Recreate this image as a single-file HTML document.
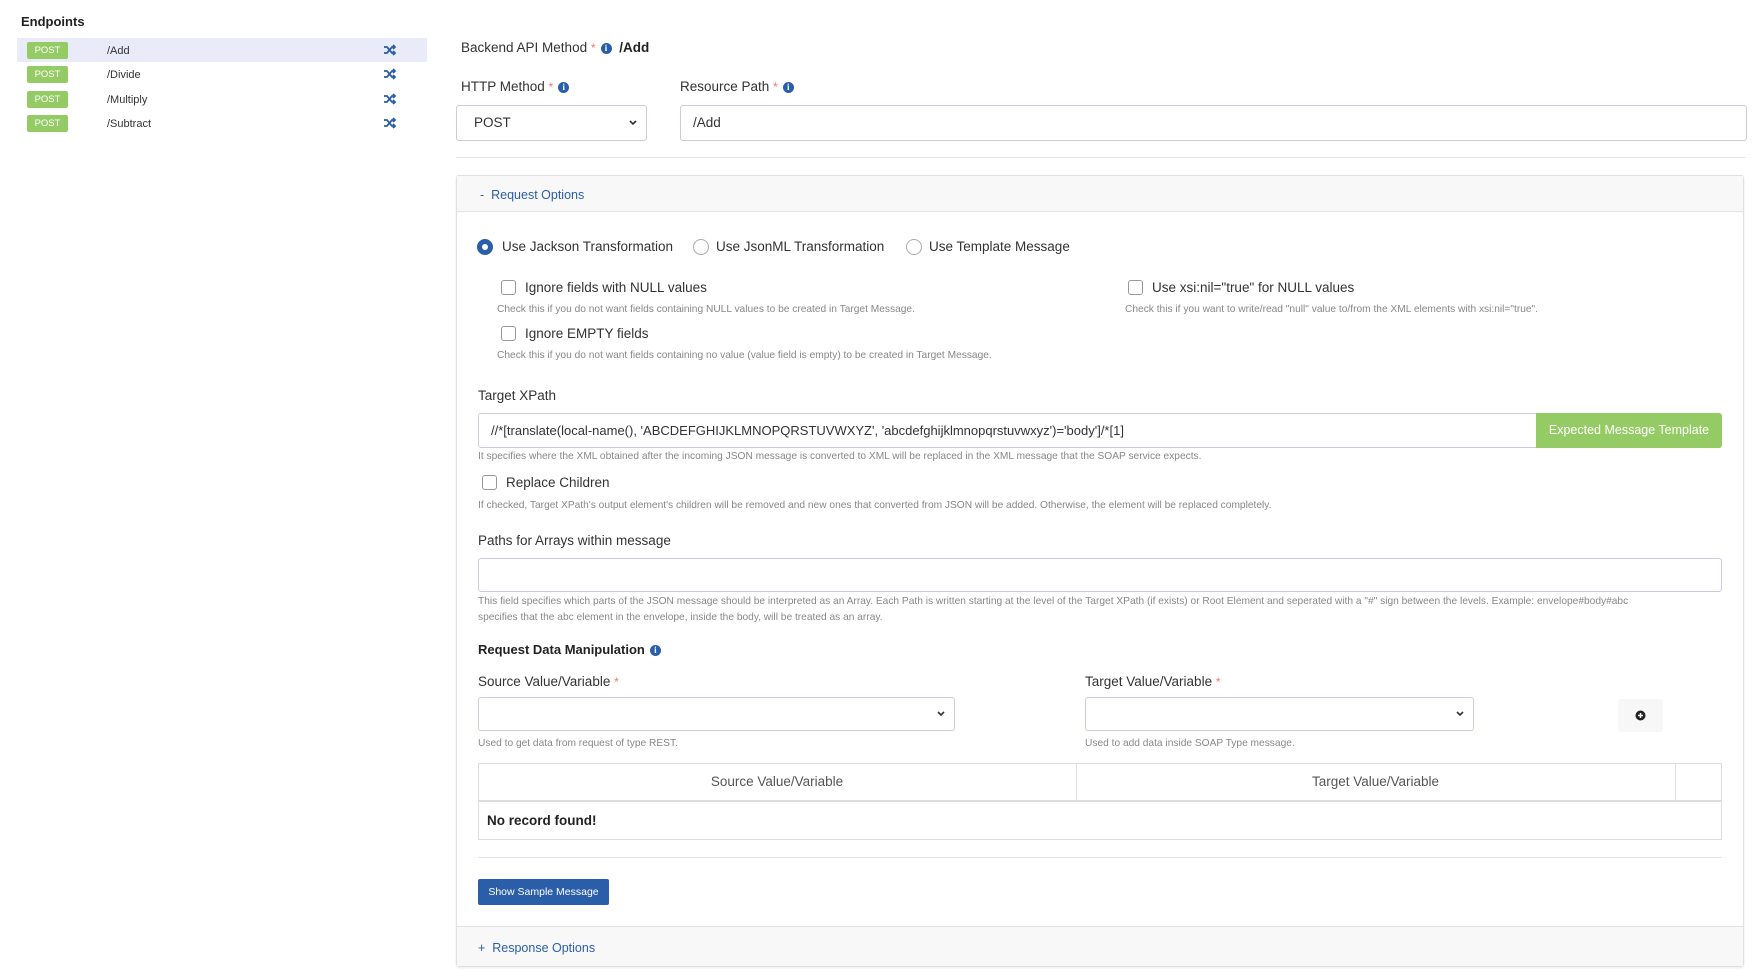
<!DOCTYPE html>
<html><head><meta charset="utf-8"><style>
*{box-sizing:border-box;margin:0;padding:0}
body{width:1759px;height:977px;background:#fff;font-family:"Liberation Sans",sans-serif;color:#333;position:relative;overflow:hidden}
.a{position:absolute;white-space:nowrap}
.lbl{font-size:13.5px;color:#333}
.req{color:#e77;font-size:12px}
.help{font-size:10.2px;color:#888}
.info{display:inline-block;width:11px;height:11px;border-radius:50%;background:#2a5ea8;color:#fff;font-size:9px;font-weight:bold;text-align:center;line-height:11px;vertical-align:middle;margin-left:5px;font-family:"Liberation Serif",serif}
.badge{position:absolute;left:27px;width:41px;height:17px;background:#95cb65;color:#fff;font-size:9.5px;text-align:center;line-height:17px;border-radius:2px}
.path{position:absolute;left:107px;font-size:11px;color:#333}
.shuf{position:absolute;left:384px;width:12px;height:12px}
.box{position:absolute;border:1px solid #ccd;border-radius:3px;background:#fff}
.cb{position:absolute;width:15px;height:15px;border:1px solid #999;border-radius:3px;background:#fff}
.rd{position:absolute;width:16px;height:16px;border:1px solid #aaa;border-radius:50%;background:#fff}
.chev{position:absolute;right:8px;top:50%;margin-top:-5px;width:10px;height:10px}
</style></head><body>
<div class="a" style="left:21px;top:14px;font-size:13px;font-weight:bold;color:#222">Endpoints</div>
<div class="a" style="left:17px;top:38px;width:410px;height:24px;background:#eaebf8"></div>
<div class="badge" style="top:42px">POST</div><div class="path" style="top:45px">/Add</div>
<div class="badge" style="top:66px">POST</div><div class="path" style="top:69px">/Divide</div>
<div class="badge" style="top:91px">POST</div><div class="path" style="top:94px">/Multiply</div>
<div class="badge" style="top:115px">POST</div><div class="path" style="top:118px">/Subtract</div>
<svg class="shuf" style="top:44px" viewBox="0 0 12 12"><path d="M0 3h3l5 6h3M0 9h3l5-6h3M9 1l2 2-2 2M9 7l2 2-2 2" stroke="#2a5ea8" stroke-width="1.8" fill="none"/></svg>
<svg class="shuf" style="top:68px" viewBox="0 0 12 12"><path d="M0 3h3l5 6h3M0 9h3l5-6h3M9 1l2 2-2 2M9 7l2 2-2 2" stroke="#2a5ea8" stroke-width="1.8" fill="none"/></svg>
<svg class="shuf" style="top:93px" viewBox="0 0 12 12"><path d="M0 3h3l5 6h3M0 9h3l5-6h3M9 1l2 2-2 2M9 7l2 2-2 2" stroke="#2a5ea8" stroke-width="1.8" fill="none"/></svg>
<svg class="shuf" style="top:117px" viewBox="0 0 12 12"><path d="M0 3h3l5 6h3M0 9h3l5-6h3M9 1l2 2-2 2M9 7l2 2-2 2" stroke="#2a5ea8" stroke-width="1.8" fill="none"/></svg>

<div class="a lbl" style="left:461px;top:40px">Backend API Method <span class="req">*</span><span class="info">i</span> <b style="color:#222;margin-left:4px">/Add</b></div>
<div class="a lbl" style="left:461px;top:79px">HTTP Method <span class="req">*</span><span class="info">i</span></div>
<div class="a lbl" style="left:680px;top:79px">Resource Path <span class="req">*</span><span class="info">i</span></div>
<div class="box" style="left:456px;top:105px;width:191px;height:36px"><span class="a lbl" style="left:17px;top:9px">POST</span><svg class="chev" viewBox="0 0 10 10"><path d="M2 3l3 3 3-3" stroke="#333" stroke-width="1.6" fill="none"/></svg></div>
<div class="box" style="left:680px;top:105px;width:1067px;height:36px"><span class="a lbl" style="left:12px;top:9px">/Add</span></div>
<div class="a" style="left:456px;top:157px;width:1290px;height:1px;background:#e5e5e5"></div>

<div class="a" style="left:456px;top:175px;width:1288px;height:792px;border:1px solid #e0e0e0;border-radius:3px;box-shadow:0 1px 2px rgba(0,0,0,.08)"></div>
<div class="a" style="left:457px;top:176px;width:1286px;height:36px;background:#f8f8f8;border-bottom:1px solid #e3e3e3"></div>
<div class="a" style="left:480px;top:188px;font-size:12.5px;color:#2a5ea8">-&nbsp;&nbsp;Request Options</div>

<div class="rd" style="left:477px;top:239px;border:5px solid #2a5ea8"></div>
<div class="a lbl" style="left:502px;top:239px">Use Jackson Transformation</div>
<div class="rd" style="left:693px;top:239px"></div>
<div class="a lbl" style="left:716px;top:239px">Use JsonML Transformation</div>
<div class="rd" style="left:906px;top:239px"></div>
<div class="a lbl" style="left:929px;top:239px">Use Template Message</div>

<div class="cb" style="left:501px;top:280px"></div><div class="a lbl" style="left:525px;top:280px">Ignore fields with NULL values</div>
<div class="a help" style="left:497px;top:304px">Check this if you do not want fields containing NULL values to be created in Target Message.</div>
<div class="cb" style="left:1128px;top:280px"></div><div class="a lbl" style="left:1152px;top:280px">Use xsi:nil="true" for NULL values</div>
<div class="a help" style="left:1125px;top:304px">Check this if you want to write/read "null" value to/from the XML elements with xsi:nil="true".</div>
<div class="cb" style="left:501px;top:326px"></div><div class="a lbl" style="left:525px;top:326px">Ignore EMPTY fields</div>
<div class="a help" style="left:497px;top:350px">Check this if you do not want fields containing no value (value field is empty) to be created in Target Message.</div>

<div class="a lbl" style="left:478px;top:388px">Target XPath</div>
<div class="box" style="left:478px;top:413px;width:1062px;height:35px;border-radius:3px 0 0 3px"><span class="a lbl" style="left:12px;top:9px;font-size:13px">//*[translate(local-name(), 'ABCDEFGHIJKLMNOPQRSTUVWXYZ', 'abcdefghijklmnopqrstuvwxyz')='body']/*[1]</span></div>
<div class="a" style="left:1536px;top:413px;width:186px;height:35px;background:#95cb65;color:#fff;font-size:12.5px;text-align:center;line-height:35px;border-radius:0 3px 3px 0">Expected Message Template</div>
<div class="a help" style="left:478px;top:451px">It specifies where the XML obtained after the incoming JSON message is converted to XML will be replaced in the XML message that the SOAP service expects.</div>
<div class="cb" style="left:482px;top:475px"></div><div class="a lbl" style="left:506px;top:475px">Replace Children</div>
<div class="a help" style="left:478px;top:500px">If checked, Target XPath's output element's children will be removed and new ones that converted from JSON will be added. Otherwise, the element will be replaced completely.</div>

<div class="a lbl" style="left:478px;top:533px">Paths for Arrays within message</div>
<div class="box" style="left:478px;top:558px;width:1244px;height:34px"></div>
<div class="a help" style="left:478px;top:596px">This field specifies which parts of the JSON message should be interpreted as an Array. Each Path is written starting at the level of the Target XPath (if exists) or Root Element and seperated with a "#" sign between the levels. Example: envelope#body#abc</div>
<div class="a help" style="left:478px;top:612px">specifies that the abc element in the envelope, inside the body, will be treated as an array.</div>

<div class="a" style="left:478px;top:642px;font-size:13px;font-weight:bold;color:#222">Request Data Manipulation<span class="info">i</span></div>
<div class="a lbl" style="left:478px;top:674px">Source Value/Variable <span class="req">*</span></div>
<div class="a lbl" style="left:1085px;top:674px">Target Value/Variable <span class="req">*</span></div>
<div class="box" style="left:478px;top:697px;width:477px;height:34px"><svg class="chev" viewBox="0 0 10 10"><path d="M2 3l3 3 3-3" stroke="#333" stroke-width="1.6" fill="none"/></svg></div>
<div class="box" style="left:1085px;top:697px;width:389px;height:34px"><svg class="chev" viewBox="0 0 10 10"><path d="M2 3l3 3 3-3" stroke="#333" stroke-width="1.6" fill="none"/></svg></div>
<div class="a" style="left:1618px;top:699px;width:45px;height:33px;background:#f7f7f7;border-radius:3px"><svg style="position:absolute;left:17px;top:11px" width="11" height="11" viewBox="0 0 11 11"><circle cx="5.5" cy="5.5" r="5" fill="#222"/><path d="M5.5 3v5M3 5.5h5" stroke="#fff" stroke-width="1.5"/></svg></div>
<div class="a help" style="left:478px;top:738px">Used to get data from request of type REST.</div>
<div class="a help" style="left:1085px;top:738px">Used to add data inside SOAP Type message.</div>

<div class="a" style="left:478px;top:763px;width:1244px;height:77px;border:1px solid #ddd"></div>
<div class="a" style="left:478px;top:800px;width:1244px;height:2px;background:#ddd"></div>
<div class="a" style="left:1076px;top:763px;width:1px;height:38px;background:#ddd"></div>
<div class="a" style="left:1675px;top:763px;width:1px;height:38px;background:#ddd"></div>
<div class="a" style="left:478px;top:774px;width:598px;text-align:center;font-size:13.5px;color:#555">Source Value/Variable</div>
<div class="a" style="left:1076px;top:774px;width:599px;text-align:center;font-size:13.5px;color:#555">Target Value/Variable</div>
<div class="a" style="left:487px;top:813px;font-size:13.5px;font-weight:bold;color:#222">No record found!</div>
<div class="a" style="left:478px;top:857px;width:1244px;height:1px;background:#e5e5e5"></div>
<div class="a" style="left:478px;top:879px;width:131px;height:26px;background:#2a5ea8;color:#fff;font-size:10.5px;text-align:center;line-height:26px;border-radius:2px">Show Sample Message</div>

<div class="a" style="left:457px;top:926px;width:1286px;height:40px;background:#f8f8f8;border-top:1px solid #e3e3e3"></div>
<div class="a" style="left:478px;top:941px;font-size:12.5px;color:#2a5ea8">+&nbsp;&nbsp;Response Options</div>
</body></html>
